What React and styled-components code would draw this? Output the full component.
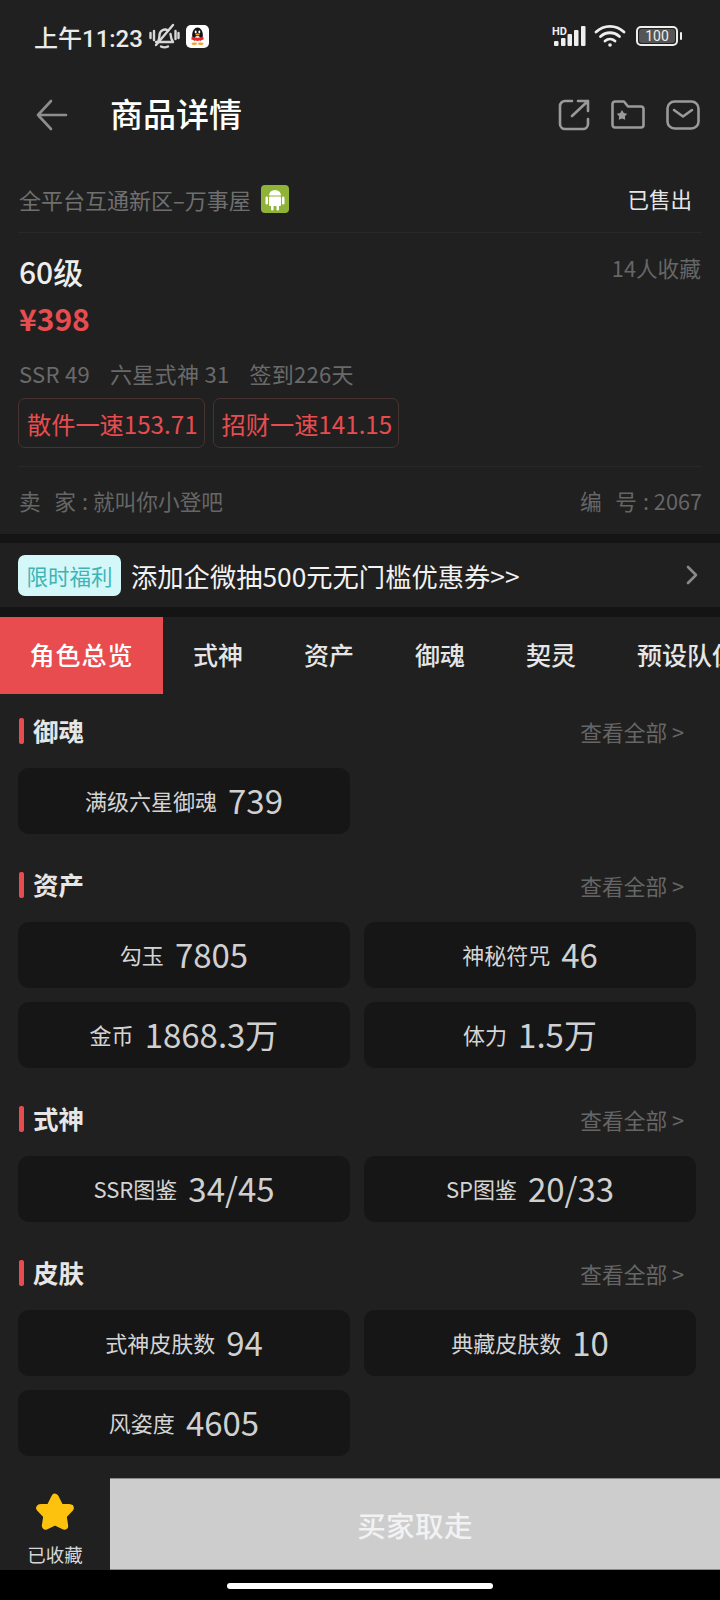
import React from "react";
import styled, { createGlobalStyle } from "styled-components";

const Global = createGlobalStyle`
  html, body { margin: 0; padding: 0; background: #202020; }
  * { box-sizing: border-box; }
  body { font-family: "Noto Sans CJK SC", "Noto Sans", sans-serif; }
`;

const Page = styled.div`
  width: 720px; height: 1600px; overflow: hidden; background: #202020;
  display: flex; flex-direction: column; color: #eee;
`;
const StatusBar = styled.div`
  height: 72px; display: flex; align-items: center; justify-content: space-between;
  padding: 0 42px 0 34px;
`;
const StatusLeft = styled.div`display: flex; align-items: center; gap: 6px;`;
const StatusRight = styled.div`display: flex; align-items: center; gap: 8px;`;
const Time = styled.span`font-family: Roboto, "Noto Sans CJK SC", sans-serif; font-size: 24px; color: #eaeaea; font-weight: 500;`;
const NavBar = styled.div`
  height: 86px; display: flex; align-items: center; padding: 0 20px 0 36px;
`;
const NavTitle = styled.h1`
  margin: 0 0 0 42px; padding-bottom: 4px; font-size: 33px; font-weight: 500; color: #fff; flex: 1; line-height: 1;
`;
const NavIcons = styled.div`display: flex; align-items: center; gap: 21px;`;
const ShopRow = styled.div`
  margin: 0 18px; height: 75px; display: flex; align-items: center; justify-content: space-between;
  border-bottom: 1px solid #282828; padding: 7px 10px 0 1px;
`;
const ShopName = styled.div`display: flex; align-items: center; gap: 10px; font-size: 22px; color: #6f6f6f;`;
const Sold = styled.span`font-size: 21.5px; color: #e6e6e6;`;
const Info = styled.div`padding: 0 18px; position: relative;`;
const Favs = styled.span`position: absolute; right: 19px; top: 20px; font-size: 21.7px; color: #666; line-height: 30px;`;
const Level = styled.div`font-size: 30px; font-weight: 500; color: #eee; line-height: 40px; padding: 18px 0 0 1px;`;
const Price = styled.div`font-size: 30px; font-weight: 700; color: #e84c4f; line-height: 40px; margin-top: 7px; padding-left: 1px;`;
const Stats = styled.div`display: flex; gap: 20px; font-size: 22px; letter-spacing: 0.3px; color: #6a6a6a; line-height: 30px; margin-top: 20px; padding-left: 1px;`;
const Tags = styled.div`display: flex; gap: 8px; margin-top: 10px;`;
const Tag = styled.span`
  height: 50px; display: flex; align-items: center; padding: 0 6px 0 8px; font-size: 24.2px; color: #e84c4f;
  border: 1px solid #473332; border-radius: 7px; white-space: nowrap;
`;
const Seller = styled.div`
  margin-top: 18px; height: 68px; border-top: 1px solid #282828; display: flex; align-items: center;
  justify-content: space-between; font-size: 21.7px; color: #666; padding: 0 0 0 1px;
`;
const SellerField = styled.span`display: flex; align-items: center; white-space: pre;`;
const SellerKey = styled.span`width: 57px; display: flex; justify-content: space-between; margin-right: 6px;`;
const Gap = styled.div`height: ${p => p.$h}px; background: #141414;`;
const Banner = styled.div`
  height: 64px; display: flex; align-items: center; padding: 0 22px 0 18px; background: #202020;
`;
const Badge = styled.span`
  height: 41px; width: 103px; display: flex; align-items: center; justify-content: center;
  background: #d4f7f9; color: #3fb4b6; font-size: 21.5px; border-radius: 7px;
`;
const BannerText = styled.span`flex: 1; margin-left: 10px; font-size: 26.3px; color: #f2f2f2; white-space: nowrap;`;
const Tabs = styled.div`height: 77px; display: flex; align-items: stretch; overflow: hidden;`;
const TabItem = styled.div`
  flex: none; display: flex; align-items: center; justify-content: center;
  font-size: 25px; font-weight: 500; white-space: nowrap;
  color: ${p => (p.$active ? "#fff" : "#e6e6e6")};
  background: ${p => (p.$active ? "#e84c4f" : "transparent")};
  width: ${p => (p.$active ? "163px" : "auto")};
  padding: ${p => (p.$active ? "0 0 3px" : "0 31px 3px 30px")};
  letter-spacing: ${p => (p.$active ? "1px" : "0")};
`;
const Sections = styled.div`padding: 19px 18px 0; display: flex; flex-direction: column; gap: 33px; height: 784px;`;
const Head = styled.div`
  height: 36px; margin-bottom: 19px; display: flex; align-items: center; justify-content: space-between;
  padding-right: 18px;
`;
const Title = styled.div`
  display: flex; align-items: center; gap: 9px; font-size: 25.5px; font-weight: 700; color: #e6e6e6;
  &::before { content: ""; width: 5px; height: 26px; background: #e84c4f; border-radius: 2px; margin-left: 1px; }
`;
const TitleText = styled.span`margin-top: -4px;`;
const More = styled.span`font-size: 21.7px; color: #666; padding-top: 1px;`;
const Grid = styled.div`display: grid; grid-template-columns: 332px 332px; column-gap: 14px; row-gap: 14px;`;
const Card = styled.div`
  height: 66px; background: #161616; border-radius: 11px; display: flex; align-items: center; justify-content: center;
  gap: 11px; color: #d4d4d4; padding-bottom: 2px;
`;
const Label = styled.span`font-size: 22px;`;
const Value = styled.span`font-size: 33px; font-weight: 400; color: #d0d0d0;`;
const Bottom = styled.div`height: 92px; display: flex; background: #202020;`;
const Fav = styled.div`
  width: 110px; display: flex; flex-direction: column; align-items: center; padding-top: 14px;
  font-size: 18.5px; line-height: 26px; color: #d6d6d6;
`;
const FavLabel = styled.span`margin-top: 9px;`;
const Buy = styled.div`
  flex: 1; background: #cdcdcd; display: flex; align-items: center; justify-content: center;
  color: #f2f2f2; font-size: 28.5px; font-weight: 500; letter-spacing: 0.4px;
  border-top: 1px solid #8a8a8a; border-bottom: 1px solid #8a8a8a;
`;
const HomeArea = styled.div`flex: 1; background: #000; display: flex; justify-content: center; padding-top: 13px;`;
const HomePill = styled.div`width: 266px; height: 6px; border-radius: 3px; background: #fff;`;

const Back = () => (
  <svg width="32" height="32" viewBox="0 0 32 32" fill="none" stroke="#8e8e8e" strokeWidth="2.6" strokeLinecap="round" strokeLinejoin="round">
    <path d="M2 16h28M15 2 2 16l13 14" />
  </svg>
);
const Share = () => (
  <svg width="32" height="32" viewBox="0 0 32 32" fill="none" stroke="#9a9a9a" strokeWidth="2.6" strokeLinecap="round" strokeLinejoin="round">
    <path d="M14 2H7a5 5 0 0 0-5 5v18a5 5 0 0 0 5 5h18a5 5 0 0 0 5-5v-5" />
    <path d="M14 17 30 2M20 2h10v10" />
  </svg>
);
const Folder = () => (
  <svg width="34" height="30" viewBox="0 0 34 30" fill="none" stroke="#9a9a9a" strokeWidth="2.6" strokeLinejoin="round">
    <path d="M1.5 4a2.5 2.5 0 0 1 2.5-2.500h9l4 5h13a2.500 2.500 0 0 1 2.500 2.500v16a2.500 2.500 0 0 1-2.500 2.500H4A2.500 2.500 0 0 1 1.500 25z" />
    <path fill="#9a9a9a" stroke="none" d="m11 10 1.800 2.900 3.400.8-2.300 2.600.3 3.400-3.200-1.300-3.200 1.300.3-3.400-2.300-2.600 3.400-.8z" />
  </svg>
);
const Mail = () => (
  <svg width="34" height="30" viewBox="0 0 34 30" fill="none" stroke="#9a9a9a" strokeWidth="2.6" strokeLinecap="round" strokeLinejoin="round">
    <rect x="1.500" y="1.500" width="31" height="27" rx="7" />
    <path d="m8 10 9 6.500L26 10" />
  </svg>
);
const Muted = () => (
  <svg width="31" height="27" viewBox="0 0 31 27" fill="none" stroke="#d8d8d8" strokeWidth="2.400" strokeLinecap="round" strokeLinejoin="round">
    <path d="M9 19c1-2 1.500-3.500 1.500-7a5.500 5.500 0 0 1 8.500-4.500M21.500 11c.3 3.500 1 6 2.500 8H7" />
    <path d="M12 23.500c2 1 5 1 7 0M7 22 24 2M1.500 10v5M5 8v9M26.500 8v8M29.500 10v5" />
  </svg>
);
const QQ = () => (
  <svg width="23" height="23" viewBox="0 0 23 23">
    <rect width="23" height="23" rx="5" fill="#fff" />
    <ellipse cx="11.500" cy="10" rx="5.400" ry="7.500" fill="#111" />
    <ellipse cx="9.700" cy="7" rx="1" ry="1.400" fill="#fff" />
    <ellipse cx="13.300" cy="7" rx="1" ry="1.400" fill="#fff" />
    <ellipse cx="11.500" cy="9.500" rx="2.200" ry="1" fill="#f5a623" />
    <ellipse cx="11.500" cy="14.500" rx="3.200" ry="3.500" fill="#fff" />
    <path d="M5.800 11.500c3 1.500 8.400 1.500 11.400 0l.5 3-6.200 1.500-6.200-1.500z" fill="#e22" />
    <ellipse cx="8.300" cy="18.800" rx="2.800" ry="1.200" fill="#f5a623" />
    <ellipse cx="14.700" cy="18.800" rx="2.800" ry="1.200" fill="#f5a623" />
  </svg>
);
const Signal = () => (
  <svg width="34" height="22" viewBox="0 0 34 22" fill="#eee">
    <rect x="2" y="16" width="4.500" height="5" rx="1" />
    <rect x="9" y="13" width="4.500" height="8" rx="1" />
    <rect x="15.500" y="9" width="4.500" height="12" rx="1" />
    <rect x="22" y="5" width="4.500" height="16" rx="1" />
    <rect x="29" y="1" width="4.500" height="20" rx="1" />
    <text x="0" y="9.500" fontSize="11" fontWeight="700" fontFamily="Roboto">HD</text>
  </svg>
);
const Wifi = () => (
  <svg width="32" height="24" viewBox="0 0 32 24" fill="none" stroke="#eee" strokeWidth="2.800" strokeLinecap="round">
    <path d="M2 8c8-7.500 20-7.500 28 0M6.500 12.500c5.500-5 13.500-5 19 0M11 17c3-2.500 7-2.500 10 0" />
    <circle cx="16" cy="21" r="1.800" fill="#eee" stroke="none" />
  </svg>
);
const BatteryBox = styled.div`
  width: 42px; height: 20px; border: 2px solid #eee; border-radius: 5px; padding: 1px; position: relative; margin-left: 2px;
  &::after { content: ""; position: absolute; right: -6px; top: 4px; width: 2px; height: 8px; background: #eee; border-radius: 1px; }
`;
const BatteryFill = styled.div`
  height: 100%; background: #555; border-radius: 3px; font-family: Roboto, sans-serif; font-size: 14px; line-height: 14px; text-align: center; color: #eee;
`;
const Android = () => (
  <svg width="28" height="28" viewBox="0 0 28 28">
    <rect width="28" height="28" rx="4" fill="#8fb339" />
    <g fill="#fff">
      <path d="M8 10.500a6 5.500 0 0 1 12 0z" />
      <rect x="8" y="11.500" width="12" height="9.500" rx="1" />
      <rect x="4.500" y="11.500" width="2.500" height="8" rx="1.200" />
      <rect x="21" y="11.500" width="2.500" height="8" rx="1.200" />
      <rect x="10" y="20" width="2.500" height="5.500" rx="1.200" />
      <rect x="15.500" y="20" width="2.500" height="5.500" rx="1.200" />
    </g>
  </svg>
);
const Chevron = () => (
  <svg width="12" height="20" viewBox="0 0 12 20" fill="none" stroke="#8a8a8a" strokeWidth="2.600" strokeLinecap="round" strokeLinejoin="round">
    <path d="m2 2 8 8-8 8" />
  </svg>
);
const Star = () => (
  <svg width="42" height="40" viewBox="0 0 38 36">
    <path
      fill="#fdc20e" stroke="#fdc20e" strokeWidth="7" strokeLinejoin="round"
      d="m19 5 4 8 9.500 1.500-6.500 6.800 1.400 9.200-8.400-4.200-8.400 4.200 1.400-9.200-6.500-6.800L15 13z"
    />
  </svg>
);

const sections = [
  { title: "御魂", items: [["满级六星御魂", "739"]] },
  { title: "资产", items: [["勾玉", "7805"], ["神秘符咒", "46"], ["金币", "1868.3万"], ["体力", "1.5万"]] },
  { title: "式神", items: [["SSR图鉴", "34/45"], ["SP图鉴", "20/33"]] },
  { title: "皮肤", items: [["式神皮肤数", "94"], ["典藏皮肤数", "10"], ["风姿度", "4605"]] },
];
const tabs = ["角色总览", "式神", "资产", "御魂", "契灵", "预设队伍"];

export default function App() {
  return (
    <Page>
      <Global />
      <StatusBar>
        <StatusLeft>
          <Time>上午11:23</Time>
          <Muted />
          <QQ />
        </StatusLeft>
        <StatusRight>
          <Signal />
          <Wifi />
          <BatteryBox><BatteryFill>100</BatteryFill></BatteryBox>
        </StatusRight>
      </StatusBar>
      <NavBar>
        <Back />
        <NavTitle>商品详情</NavTitle>
        <NavIcons><Share /><Folder /><Mail /></NavIcons>
      </NavBar>
      <ShopRow>
        <ShopName>全平台互通新区–万事屋 <Android /></ShopName>
        <Sold>已售出</Sold>
      </ShopRow>
      <Info>
        <Favs>14人收藏</Favs>
        <Level>60级</Level>
        <Price>¥398</Price>
        <Stats><span>SSR 49</span><span>六星式神 31</span><span>签到226天</span></Stats>
        <Tags><Tag>散件一速153.71</Tag><Tag>招财一速141.15</Tag></Tags>
        <Seller>
          <SellerField><SellerKey><span>卖</span><span>家</span></SellerKey>: 就叫你小登吧</SellerField>
          <SellerField><SellerKey><span>编</span><span>号</span></SellerKey>: 2067</SellerField>
        </Seller>
      </Info>
      <Gap $h={9} />
      <Banner>
        <Badge>限时福利</Badge>
        <BannerText>添加企微抽500元无门槛优惠券&gt;&gt;</BannerText>
        <Chevron />
      </Banner>
      <Gap $h={10} />
      <Tabs>
        {tabs.map((t, i) => <TabItem key={t} $active={i === 0}>{t}</TabItem>)}
      </Tabs>
      <Sections>
        {sections.map(s => (
          <section key={s.title}>
            <Head><Title><TitleText>{s.title}</TitleText></Title><More>查看全部 &gt;</More></Head>
            <Grid>
              {s.items.map(([l, v]) => <Card key={l}><Label>{l}</Label><Value>{v}</Value></Card>)}
            </Grid>
          </section>
        ))}
      </Sections>
      <Bottom>
        <Fav><Star /><FavLabel>已收藏</FavLabel></Fav>
        <Buy>买家取走</Buy>
      </Bottom>
      <HomeArea><HomePill /></HomeArea>
    </Page>
  );
}
